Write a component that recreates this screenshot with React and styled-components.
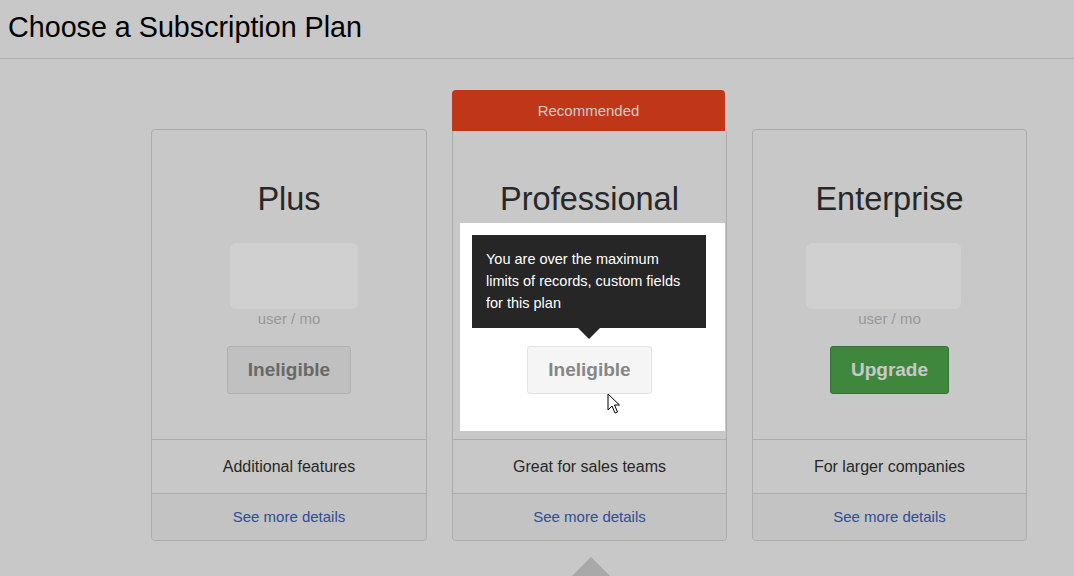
import styled, { createGlobalStyle } from "styled-components";

const GlobalStyle = createGlobalStyle`
  html, body {
    margin: 0;
    padding: 0;
    overflow: hidden;
    background: #fff;
  }
  body {
    font-family: "Liberation Sans", Arial, sans-serif;
    color: #333;
  }
`;

const plans = [
  {
    name: "Plus",
    priceWidth: 128,
    priceShift: 5,
    action: "Ineligible",
    tagline: "Additional features",
  },
  {
    name: "Professional",
    priceWidth: 128,
    priceShift: 0,
    action: "Ineligible",
    tagline: "Great for sales teams",
    recommended: true,
  },
  {
    name: "Enterprise",
    priceWidth: 155,
    priceShift: -6,
    action: "Upgrade",
    tagline: "For larger companies",
  },
];

const Page = styled.div`
  min-height: 576px;
`;

const Header = styled.header`
  padding: 11px 8px 15px;
  border-bottom: 1px solid #dedede;
  h1 {
    margin: 0;
    font-size: 28.7px;
    font-weight: normal;
    line-height: 32px;
    color: #000;
  }
`;

const PlanGrid = styled.div`
  display: grid;
  grid-template-columns: 276px 275px 275px;
  column-gap: 25px;
  padding-left: 151px;
  margin-top: 70px;
`;

const Card = styled.section`
  position: relative;
  background: #fff;
  border: 1px solid #dcdcdc;
  border-radius: 4px;
  display: flex;
  flex-direction: column;
`;

const Ribbon = styled.div`
  position: absolute;
  top: -40px;
  left: -1px;
  right: 1px;
  height: 41px;
  background: #f4471f;
  border-radius: 4px 4px 0 0;
  color: #fff;
  font-size: 15px;
  line-height: 41px;
  text-align: center;
`;

const CardBody = styled.div`
  height: 309px;
  box-sizing: border-box;
  padding-top: 51px;
  display: flex;
  flex-direction: column;
  align-items: center;
`;

const PlanName = styled.h2`
  margin: 0;
  font-size: 32.5px;
  font-weight: normal;
  line-height: 36px;
  color: #333;
`;

const PriceBox = styled.div`
  position: relative;
  z-index: ${(p) => (p.$lifted ? 30 : "auto")};
  margin-top: 26px;
  margin-left: ${(p) => p.$shift * 2}px;
  width: ${(p) => p.$width}px;
  height: 66px;
  border-radius: 6px;
  background: #d0d0d0;
`;

const PriceUnit = styled.div`
  margin-top: 1px;
  font-size: 15px;
  line-height: 18px;
  color: #c4c4c4;
`;

const ActionButton = styled.button`
  margin-top: 18px;
  height: 48px;
  padding: 0 20px;
  border-radius: 3px;
  font-family: inherit;
  font-size: 19px;
  font-weight: bold;
  border: 1px solid ${(p) => (p.$primary ? "#468f45" : "#e2e2e2")};
  background: ${(p) => (p.$primary ? "#4fad4d" : "#f5f5f5")};
  color: ${(p) => (p.$primary ? "#fff" : "#868686")};
`;

const Tagline = styled.div`
  border-top: 1px solid #dcdcdc;
  padding: 16px 0 15px;
  font-size: 16px;
  line-height: 22px;
  text-align: center;
  color: #333;
`;

const CardFooter = styled.div`
  border-top: 1px solid #dcdcdc;
  background: #f9f9f9;
  border-radius: 0 0 4px 4px;
  padding: 13px 0;
  font-size: 15px;
  line-height: 20px;
  text-align: center;
  a {
    color: #3b64bf;
    text-decoration: none;
  }
`;

const Spotlight = styled.div`
  position: absolute;
  z-index: 20;
  top: 93px;
  left: 7px;
  width: 265px;
  height: 208px;
  box-shadow: 0 0 0 3000px rgba(0, 0, 0, 0.216);
`;

const Tooltip = styled.div`
  position: absolute;
  top: 12px;
  left: 12px;
  width: 234px;
  box-sizing: border-box;
  padding: 13px 14px 14px;
  background: #262626;
  color: #fff;
  font-size: 14.5px;
  line-height: 22px;

  &::after {
    content: "";
    position: absolute;
    left: 50%;
    bottom: -11px;
    margin-left: -11px;
    border-left: 11px solid transparent;
    border-right: 11px solid transparent;
    border-top: 11px solid #262626;
  }
`;

const Cursor = styled.svg`
  position: absolute;
  left: 147px;
  top: 170px;
`;

const DetailsRow = styled.div`
  display: grid;
  grid-template-columns: 276px 275px 275px;
  column-gap: 25px;
  padding-left: 151px;
  margin-top: 16px;
`;

const Pointer = styled.div`
  grid-column: 2;
  justify-self: center;
  margin-left: 3px;
  width: 0;
  height: 0;
  border-left: 21px solid transparent;
  border-right: 21px solid transparent;
  border-bottom: 21px solid #d8d8d8;
`;

const PlanCard = ({ plan }) => (
  <Card>
    {plan.recommended && <Ribbon>Recommended</Ribbon>}
    <CardBody>
      <PlanName>{plan.name}</PlanName>
      <PriceBox
        $width={plan.priceWidth}
        $shift={plan.priceShift}
        $lifted={!plan.recommended}
      />
      <PriceUnit>user / mo</PriceUnit>
      <ActionButton $primary={plan.action === "Upgrade"}>
        {plan.action}
      </ActionButton>
    </CardBody>
    <Tagline>{plan.tagline}</Tagline>
    <CardFooter>
      <a href="#">See more details</a>
    </CardFooter>
    {plan.recommended && (
      <Spotlight>
        <Tooltip>
          You are over the maximum limits of records, custom fields for this
          plan
        </Tooltip>
        <Cursor width="14" height="21" viewBox="0 0 14 21">
          <path
            d="M1 1 L1 17 L5 13 L8 20 L10.5 19 L7.5 12 L12.5 12 Z"
            fill="#fff"
            stroke="#000"
            strokeWidth="1"
            strokeLinejoin="round"
          />
        </Cursor>
      </Spotlight>
    )}
  </Card>
);

export default function App() {
  return (
    <Page>
      <GlobalStyle />
      <Header>
        <h1>Choose a Subscription Plan</h1>
      </Header>
      <PlanGrid>
        {plans.map((plan) => (
          <PlanCard key={plan.name} plan={plan} />
        ))}
      </PlanGrid>
      <DetailsRow>
        <Pointer />
      </DetailsRow>
    </Page>
  );
}
